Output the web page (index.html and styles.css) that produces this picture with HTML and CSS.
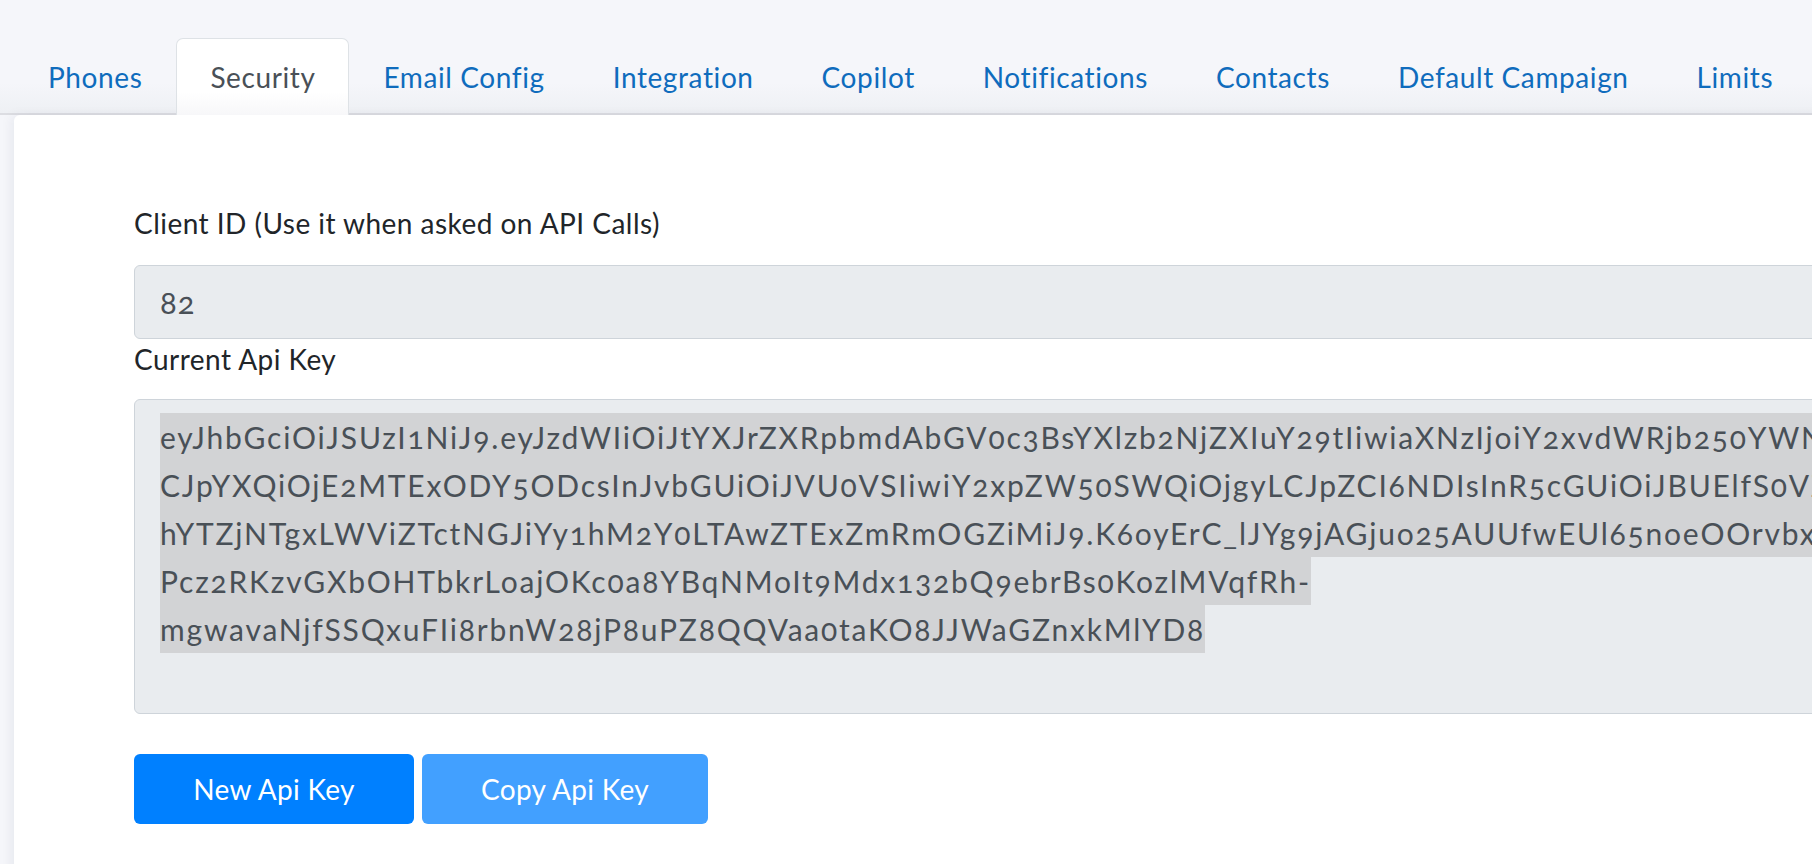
FILE: index.html
```html
<!DOCTYPE html>
<html lang="en">
<head>
<meta charset="utf-8">
<title>Settings - Security</title>
<link rel="stylesheet" href="styles.css">
</head>
<body>
<div class="page">
  <nav class="tabs">
    <a class="tab" href="#">Phones</a>
    <a class="tab active" href="#">Security</a>
    <a class="tab" href="#">Email Config</a>
    <a class="tab" href="#">Integration</a>
    <a class="tab" href="#">Copilot</a>
    <a class="tab" href="#">Notifications</a>
    <a class="tab" href="#">Contacts</a>
    <a class="tab" href="#">Default Campaign</a>
    <a class="tab" href="#">Limits</a>
  </nav>
  <section class="card">
    <label class="label">Client ID (Use it when asked on API Calls)</label>
    <div class="input">82</div>
    <label class="label label-key">Current Api Key</label>
    <div class="textarea">
      <div class="sel">eyJhbGciOiJSUzI1NiJ9.eyJzdWIiOiJtYXJrZXRpbmdAbGV0c3BsYXlzb2NjZXIuY29tIiwiaXNzIjoiY2xvdWRjb250YWN0YWkiLCJhdWQiOiJjbG91ZGNvbnRhY3QiL</div>
      <div class="sel">CJpYXQiOjE2MTExODY5ODcsInJvbGUiOiJVU0VSIiwiY2xpZW50SWQiOjgyLCJpZCI6NDIsInR5cGUiOiJBUElfS0VZIiwia2V5IjoiNmNhY2E0ZTQtZ</div>
      <div class="sel">hYTZjNTgxLWViZTctNGJiYy1hM2Y0LTAwZTExZmRmOGZiMiJ9.K6oyErC_lJYg9jAGjuo25AUUfwEUl65noeOOrvbxAq3Wn1cT0sRk8bL2mFhJ</div>
      <div class="sel">Pcz2RKzvGXbOHTbkrLoajOKc0a8YBqNMoIt9Mdx132bQ9ebrBs0KozlMVqfRh-</div>
      <div class="sel">mgwavaNjfSSQxuFIi8rbnW28jP8uPZ8QQVaa0taKO8JJWaGZnxkMlYD8</div>
    </div>
    <div class="actions">
      <button class="btn btn-primary">New Api Key</button>
      <button class="btn btn-light">Copy Api Key</button>
    </div>
  </section>
</div>
</body>
</html>
```
FILE: styles.css
```css
html, body {
  margin: 0;
  padding: 0;
}
body {
  background: #f5f6fa;
  font-family: "Lato", "Open Sans", sans-serif;
  font-variant-numeric: oldstyle-nums;
  overflow: hidden;
  width: 1812px;
  height: 864px;
}
.page {
  padding-top: 38px;
  width: 2400px;
}
.tabs {
  display: flex;
  padding-left: 14px;
  height: 77px;
  border-bottom: 2px solid #dcdde2;
  background: linear-gradient(to bottom, rgba(238,240,244,0) 0%, rgba(238,240,244,0) 60%, #eef0f4 100%);
  box-sizing: border-box;
}
.tab {
  display: flex;
  align-items: center;
  padding: 0 33px;
  font-size: 28px;
  letter-spacing: 0.6px;
  color: #0f6cbd;
  text-decoration: none;
  border: 1px solid transparent;
  border-bottom: none;
  border-radius: 7px 7px 0 0;
  margin-bottom: -2px;
}
.tab.active {
  color: #495057;
  background: linear-gradient(to bottom, #ffffff 70%, #f7f7f9 100%);
  border-color: #dee2e6;
}
.card {
  margin-left: 14px;
  background: #fff;
  border-radius: 6px 0 0 0;
  box-shadow: -3px 0 12px rgba(20, 30, 60, 0.06);
  padding: 88px 0 60px 120px;
  height: 800px;
  box-sizing: border-box;
}
.label {
  display: block;
  font-size: 28px;
  line-height: 40px;
  color: #212529;
  letter-spacing: 0.47px;
}
.input {
  margin-top: 22px;
  height: 74px;
  box-sizing: border-box;
  background: #e9ecef;
  border: 1px solid #ced4da;
  border-radius: 6px 0 0 6px;
  padding-left: 25px;
  display: flex;
  align-items: center;
  font-size: 31px;
  letter-spacing: 1px;
  color: #495057;
}
.label-key {
  margin-top: 0;
}
.textarea {
  margin-top: 20px;
  height: 315px;
  box-sizing: border-box;
  background: #e9ecef;
  border: 1px solid #ced4da;
  border-radius: 6px 0 0 6px;
  padding: 13px 0 0 25px;
  overflow: hidden;
  font-size: 30px;
  color: #495057;
}
.sel {
  width: fit-content;
  background: #d2d3d5;
  line-height: 48px;
  height: 48px;
  white-space: nowrap;
  letter-spacing: 1.8px;
}
.actions {
  display: flex;
  gap: 8px;
  margin-top: 40px;
}
.btn {
  height: 70px;
  border: none;
  border-radius: 6px;
  color: #fff;
  font-family: inherit;
  font-size: 28px;
  letter-spacing: 0.3px;
  cursor: pointer;
}
.btn-primary {
  width: 280px;
  background: #0080ff;
}
.btn-light {
  width: 286px;
  background: #42a0ff;
}
```
